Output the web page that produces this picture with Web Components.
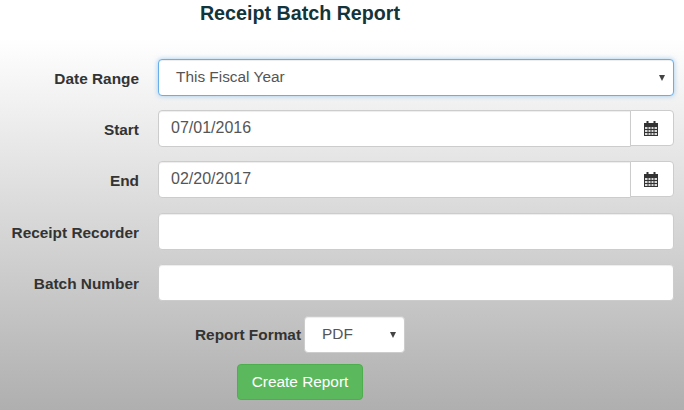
<!DOCTYPE html>
<html>
<head>
<meta charset="utf-8">
<style>
html, body { margin: 0; height: 100%; }
body {
  width: 684px; height: 410px; overflow: hidden;
  font-family: "Liberation Sans", Arial, sans-serif;
  color: #333;
  background: linear-gradient(#fff 0, #fff 38px, #afafaf 410px);
}
</style>
</head>
<body>
<report-form>
  <span slot="title">Receipt Batch Report</span>
  <form-row label="Date Range"><select-box focus>This Fiscal Year</select-box></form-row>
  <form-row label="Start"><date-box>07/01/2016</date-box></form-row>
  <form-row label="End"><date-box>02/20/2017</date-box></form-row>
  <form-row label="Receipt Recorder"><text-box></text-box></form-row>
  <form-row label="Batch Number"><text-box></text-box></form-row>
  <format-row slot="footer" label="Report Format"><select-box small>PDF</select-box></format-row>
  <green-button slot="footer">Create Report</green-button>
</report-form>
<script>
class ReportForm extends HTMLElement {
  constructor() {
    super();
    this.attachShadow({mode: 'open'}).innerHTML = `
<style>
:host { display: block; width: 684px; }
h1 { margin: 0; height: 59px; box-sizing: border-box; padding: 1px 0 0 0; width: 600px; text-align: center;
  font-size: 19.7px; line-height: 24px; font-weight: bold; color: #12343b; }
.rows { display: flex; flex-direction: column; gap: 14.2px; }
.foot { display: flex; flex-direction: column; align-items: flex-start; gap: 11px; margin-top: 16px; }
</style>
<h1><slot name="title"></slot></h1>
<div class="rows"><slot></slot></div>
<div class="foot"><slot name="footer"></slot></div>`;
  }
}
class FormRow extends HTMLElement {
  constructor() {
    super();
    this.attachShadow({mode: 'open'}).innerHTML = `
<style>
:host { display: flex; align-items: center; height: 37px; }
label { width: 139px; text-align: right; font-size: 15.4px; font-weight: bold; color: #333; margin-right: 19px; padding-top: 3px; white-space: nowrap; }
.f { width: 516px; }
</style>
<label></label><div class="f"><slot></slot></div>`;
    this.shadowRoot.querySelector('label').textContent = this.getAttribute('label');
  }
}
class FormatRow extends HTMLElement {
  constructor() {
    super();
    this.attachShadow({mode: 'open'}).innerHTML = `
<style>
:host { display: flex; align-items: center; height: 36px; padding-left: 195px; }
label { font-size: 15.4px; font-weight: bold; color: #333; margin-right: 3px; white-space: nowrap; }
</style>
<label></label><slot></slot>`;
    this.shadowRoot.querySelector('label').textContent = this.getAttribute('label');
  }
}
const boxCss = `
:host { display: block; }
.b { box-sizing: border-box; height: 37px; background: #fff; border: 1px solid #ccc; border-radius: 4px;
  font-size: 15.4px; color: #555; display: flex; align-items: center; box-shadow: inset 0 1px 1px rgba(0,0,0,.075); }
`;
class SelectBox extends HTMLElement {
  constructor() {
    super();
    this.attachShadow({mode: 'open'}).innerHTML = `
<style>${boxCss}
:host([small]) { display: block; width: 101px; }
.b { position: relative; padding-left: 17px; padding-bottom: 2px; }
:host([focus]) .b { border-color: #66afe9; box-shadow: inset 0 1px 1px rgba(0,0,0,.075), 0 0 5px rgba(102,175,233,.6); }
i { position: absolute; right: 8px; top: 15px; width: 0; height: 0; border: 3.5px solid transparent; border-top: 6px solid #444; border-bottom: 0; }
</style>
<div class="b"><slot></slot><i></i></div>`;
  }
}
class DateBox extends HTMLElement {
  constructor() {
    super();
    this.attachShadow({mode: 'open'}).innerHTML = `
<style>${boxCss}
.w { display: flex; align-items: flex-start; }
.b { flex: 1; padding-left: 12px; padding-bottom: 1px; font-size: 16px; border-radius: 4px 0 0 4px; }
.a { box-sizing: border-box; width: 44px; height: 36px; margin-left: -1px; background: #fff; border: 1px solid #ccc; border-radius: 0 4px 4px 0;
  display: flex; align-items: center; justify-content: center; padding-right: 2px; }
svg { display: block; }
</style>
<div class="w"><div class="b"><slot></slot></div><div class="a">
<svg width="14" height="15" viewBox="0 0 14 15"><rect x="0" y="2" width="14" height="13" fill="#333"/><rect x="2.5" y="0" width="2" height="3" fill="#333"/><rect x="9.5" y="0" width="2" height="3" fill="#333"/><path d="M1 6h2.5v2H1zM4.5 6h2v2h-2zM7.5 6h2v2h-2zM10.5 6H13v2h-2.5zM1 9h2.5v2H1zM4.5 9h2v2h-2zM7.5 9h2v2h-2zM10.5 9H13v2h-2.5zM1 12h2.5v2H1zM4.5 12h2v2h-2zM7.5 12h2v2h-2zM10.5 12H13v2h-2.5z" fill="#d9d9d9"/></svg>
</div></div>`;
  }
}
class TextBox extends HTMLElement {
  constructor() {
    super();
    this.attachShadow({mode: 'open'}).innerHTML = `<style>${boxCss}</style><div class="b"></div>`;
  }
}
class GreenButton extends HTMLElement {
  constructor() {
    super();
    this.attachShadow({mode: 'open'}).innerHTML = `
<style>
:host { display: block; margin-left: 237px; }
button { box-sizing: border-box; width: 126px; height: 36px; padding: 0; background: #5cb85c; border: 1px solid #4cae4c; border-radius: 4px;
  color: #fff; font: 15.4px/20px "Liberation Sans", Arial, sans-serif; }
</style>
<button><slot></slot></button>`;
  }
}
customElements.define('report-form', ReportForm);
customElements.define('form-row', FormRow);
customElements.define('format-row', FormatRow);
customElements.define('select-box', SelectBox);
customElements.define('date-box', DateBox);
customElements.define('text-box', TextBox);
customElements.define('green-button', GreenButton);
</script>
</body>
</html>
